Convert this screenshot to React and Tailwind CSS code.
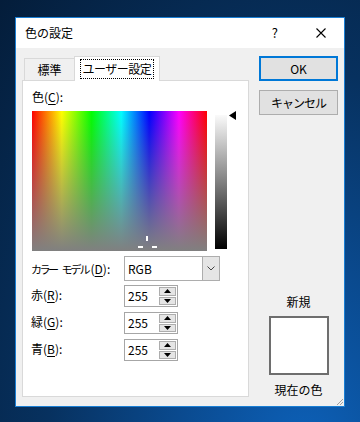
import React from "react";

const F = { fontFamily: '"Noto Sans CJK JP", "Noto Sans", sans-serif' };

function U({ children }) {
  return <span className="underline underline-offset-2">{children}</span>;
}

function Spin() {
  return (
    <div className="flex flex-col w-[17px] h-[20px] ml-auto mr-px gap-px py-px">
      <div className="flex-1 border border-[#adadad] bg-[#e5e5e5] flex items-center justify-center">
        <svg width="7" height="4" viewBox="0 0 7 4"><path d="M3.5 0L7 4H0z" fill="#000" /></svg>
      </div>
      <div className="flex-1 border border-[#adadad] bg-[#e5e5e5] flex items-center justify-center">
        <svg width="7" height="4" viewBox="0 0 7 4"><path d="M0 0H7L3.5 4z" fill="#000" /></svg>
      </div>
    </div>
  );
}

function NumRow({ label, letter }) {
  return (
    <div className="flex items-center h-[22px]">
      <div className="w-[93px] text-[12px] leading-[16px] -mt-[3px] whitespace-nowrap">
        {label}(<U>{letter}</U>):
      </div>
      <div className="w-[54px] h-[22px] border border-[#a6a6a6] bg-white flex items-center pl-[3px] text-[12px]">
        <span className="leading-[16px]">255</span>
        <Spin />
      </div>
    </div>
  );
}

export default function App() {
  return (
    <div
      className="w-[360px] h-[422px] overflow-hidden pt-[17px] pl-[15px] bg-[radial-gradient(ellipse_at_85%_110%,#0d62bb_0%,#0a4a8f_30%,#07315f_60%,#041d3a_100%)]"
      style={F}
    >
      <div className="w-[330px] h-[390px] border border-[#1a7fd4] bg-[#f0f0f0] flex flex-col relative text-black">
        {/* title bar */}
        <div className="h-[30px] bg-white flex items-center pl-[9px] shrink-0">
          <span className="text-[12px] leading-[16px]">色の設定</span>
          <span className="ml-auto text-[13px] leading-[16px] mr-[38px]">?</span>
          <svg className="mr-[18px]" width="10" height="10" viewBox="0 0 10 10">
            <path d="M0.5 0.5L9.5 9.5M9.5 0.5L0.5 9.5" stroke="#000" strokeWidth="1.1" />
          </svg>
        </div>
        {/* body */}
        <div className="flex-1 flex">
          {/* left */}
          <div className="pl-[6px] pt-[8px] flex flex-col">
            <div className="flex items-end h-[25px] relative z-10 -mb-px">
              <div className="ml-[2px] w-[50px] h-[22px] border-t border-l border-[#d9d9d9] bg-[#f0f0f0] flex items-center justify-center text-[12px] leading-[16px] mb-px">
                標準
              </div>
              <div className="w-[86px] h-[25px] border-t border-l border-r border-[#d9d9d9] bg-white flex items-center justify-center">
                <span className="text-[12px] leading-[16px] px-[2px] py-[1px] border border-dotted border-black tracking-[-0.5px]">
                  ユーザー設定
                </span>
              </div>
            </div>
            <div className="w-[227px] h-[317px] border border-[#d9d9d9] bg-white pl-[8px] pt-[8px] flex flex-col">
              <div className="text-[12px] leading-[16px] pl-px">
                色(<U>C</U>):
              </div>
              <div className="flex mt-[6px] pl-px">
                <div className="relative w-[175px] h-[140px] bg-[linear-gradient(to_right,#ff0000,#ffff00_17%,#00ff00_34%,#00ffff_51%,#0000ff_67%,#ff00ff_84%,#ff0000)]">
                  <div className="absolute inset-0 bg-[linear-gradient(to_bottom,rgba(128,128,128,0),#808080)]" />
                  <div className="absolute left-[114px] top-[125px] w-[2px] h-[5px] bg-white" />
                  <div className="absolute left-[106px] top-[135px] w-[5px] h-[2px] bg-white" />
                  <div className="absolute left-[120px] top-[135px] w-[5px] h-[2px] bg-white" />
                </div>
                <div className="ml-[8px] mt-[4px] w-[12px] h-[134px] bg-[linear-gradient(to_bottom,#fafafa,#808080_50%,#000)]" />
                <svg className="ml-[2px] mt-[0px]" width="7" height="9" viewBox="0 0 7 9">
                  <path d="M0 4.5L7 0V9z" fill="#000" />
                </svg>
              </div>
              <div className="flex items-center mt-[5px] h-[25px]">
                <div className="w-[93px] text-[12px] leading-[16px] whitespace-nowrap">
                  <span className="text-[11px] tracking-[-2.5px]">カラー</span>
                  <span className="text-[11px] tracking-[-2px] ml-[5px]">モデル</span>
                  <span className="ml-[2px]">(<U>D</U>):</span>
                </div>
                <div className="w-[96px] h-[25px] border border-[#adadad] bg-white flex items-stretch">
                  <span className="flex-1 pl-[3px] text-[12px] leading-[23px]">RGB</span>
                  <div className="w-[17px] bg-[#e5e5e5] border-l border-[#adadad] flex items-center justify-center">
                    <svg width="8" height="5" viewBox="0 0 8 5">
                      <path d="M0.5 0.5L4 4L7.5 0.5" stroke="#444" fill="none" strokeWidth="1" />
                    </svg>
                  </div>
                </div>
              </div>
              <div className="flex flex-col gap-[5px] mt-[4px]">
                <NumRow label="赤" letter="R" />
                <NumRow label="緑" letter="G" />
                <NumRow label="青" letter="B" />
              </div>
            </div>
          </div>
          {/* right */}
          <div className="ml-[10px] pt-[8px] flex flex-col w-[79px]">
            <div className="h-[25px] border-2 border-[#0078d7] bg-[#e1e1e1] flex items-center justify-center text-[12px] leading-[16px]">
              OK
            </div>
            <div className="mt-[9px] h-[25px] border border-[#adadad] bg-[#e1e1e1] flex items-center justify-center text-[12px] leading-[16px] tracking-[-1px]">
              キャンセル
            </div>
            <div className="mt-[179px] flex flex-col items-center">
              <span className="text-[12px] leading-[16px]">新規</span>
              <div className="mt-[6px] w-[60px] h-[59px] border-2 border-[#6e6e6e] bg-white" />
              <span className="mt-[7px] text-[12px] leading-[16px]">現在の色</span>
            </div>
          </div>
        </div>
        <svg className="absolute right-0 bottom-0" width="9" height="9" viewBox="0 0 9 9">
          <path d="M8 2L2 8M8 5L5 8" stroke="#a0a0a0" strokeWidth="1" />
        </svg>
      </div>
    </div>
  );
}
